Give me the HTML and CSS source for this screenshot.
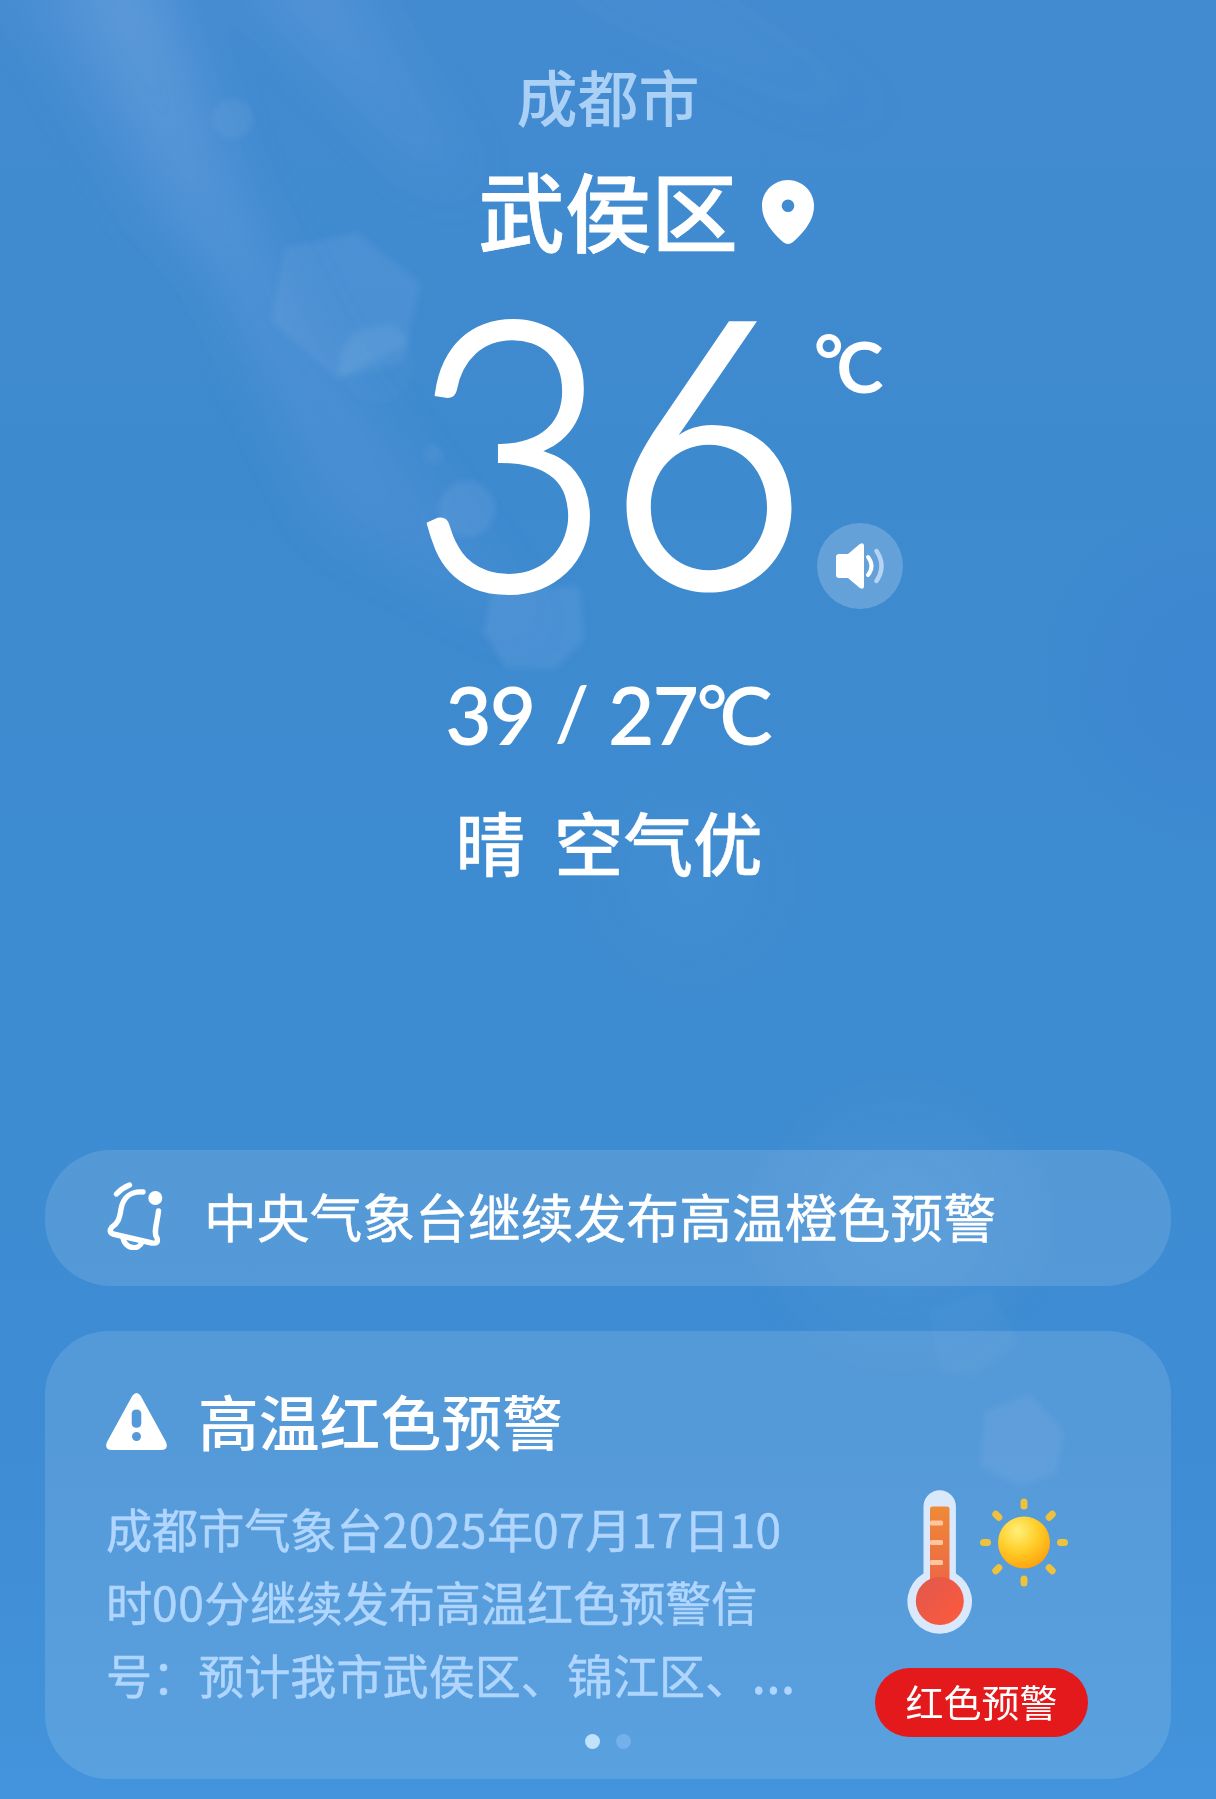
FILE: index.html
```html
<!DOCTYPE html>
<html lang="zh-CN">
<head>
<meta charset="utf-8">
<title>武侯区天气</title>
<link rel="stylesheet" href="styles.css">
</head>
<body>
<main class="screen">
  <svg class="sky" viewBox="0 0 1216 1799" aria-hidden="true">
    <defs>
      <filter id="soft" x="-50%" y="-50%" width="200%" height="200%"><feGaussianBlur stdDeviation="28"/></filter>
      <filter id="edge" x="-20%" y="-20%" width="140%" height="140%"><feGaussianBlur stdDeviation="3"/></filter>
      <radialGradient id="glow"><stop offset="0" stop-color="#fff" stop-opacity=".06"/><stop offset="1" stop-color="#fff" stop-opacity="0"/></radialGradient>
      <radialGradient id="deep"><stop offset="0" stop-color="#3a6fd6" stop-opacity=".2"/><stop offset="1" stop-color="#3a6fd6" stop-opacity="0"/></radialGradient>
      <linearGradient id="ray" x1="100" y1="0" x2="420" y2="560" gradientUnits="userSpaceOnUse"><stop offset="0" stop-color="#d5dcff" stop-opacity=".19"/><stop offset=".35" stop-color="#cfdcff" stop-opacity=".12"/><stop offset="1" stop-color="#b8baff" stop-opacity=".08"/></linearGradient>
    </defs>
    <g filter="url(#soft)" fill="url(#ray)">
      <path d="M70-40 L150-40 L235 180 L310 330 L540 640 L330 520 L190 230Z"/>
      <path d="M0-40 L60-40 L230 240 L160 240Z" opacity=".4"/>
      <path d="M230-40 L330-40 L480 190 L420 170Z" opacity=".7"/>
      <path d="M520-40 L650-40 L900 120 L800 100Z" opacity=".3"/>
    </g>
    <circle cx="1216" cy="680" r="180" fill="url(#deep)"/>
    <g fill="#cfdcff" filter="url(#edge)">
      <circle cx="233" cy="119" r="20" fill-opacity=".07"/>
      <path d="M285 248 L357 232 L421 283 L407 344 L337 379 L271 321Z" fill-opacity=".08"/>
      <path d="M337 379 L341 348 L355 330 L394 322 L409 339 L403 362Z" fill-opacity=".07"/>
      <circle cx="378" cy="366" r="37" fill-opacity=".03"/>
      <circle cx="433" cy="454" r="10" fill-opacity=".06"/>
      <circle cx="467" cy="509" r="28" fill-opacity=".09"/>
      <path d="M492 590 L580 586 L584 640 L556 668 L506 668 L484 632Z" fill-opacity=".09"/>
      <path d="M985 1412 L1030 1394 L1064 1432 L1056 1474 L1020 1486 L980 1466Z" fill-opacity=".08"/>
      <path d="M930 1310 L990 1290 L1020 1345 L975 1378 L940 1370Z" fill-opacity=".03"/>
    </g>
    <circle cx="900" cy="1220" r="170" fill="url(#glow)"/>
    <circle cx="690" cy="880" r="160" fill="url(#glow)" opacity=".5"/>
  </svg>

  <header class="now">
    <p class="city">成都市</p>
    <div class="triple district">
      <h1 class="district-name">武侯区</h1>
      <svg class="pin" viewBox="0 0 52 64" aria-hidden="true"><path fill="#fff" fill-rule="evenodd" d="M26 0C11.600 0 0 11.600 0 26c0 15 11 27 21 36q5 4 10 0c10-9 21-21 21-36C52 11.600 40.400 0 26 0zm0 19.500a6.300 6.300 0 1 1 0 12.600a6.300 6.300 0 0 1 0-12.600z"/></svg>
    </div>
    <div class="triple current">
      <div class="temp"><span class="tens">3</span><span class="ones">6</span></div>
      <div class="side">
        <span class="unit"><i>°</i>C</span>
        <button class="speak" aria-label="播报">
          <svg viewBox="0 0 48 46" aria-hidden="true">
            <path fill="#fff" d="M3 11h9L23.500 1.200Q28-1.500 28 3v40q0 4.500-4.500 1.800L12 35H3q-3 0-3-3V14q0-3 3-3z"/>
            <path d="M32 14q7 9 0 18" fill="none" stroke="#fff" stroke-width="4" stroke-linecap="round"/>
            <path d="M40.500 8q10 15 0 30" fill="none" stroke="#b5d3f5" stroke-width="4.500" stroke-linecap="round"/>
          </svg>
        </button>
      </div>
    </div>
    <p class="range"><span>39</span><span class="slash">/</span><span>27</span><span class="deg"><i>°</i>C</span></p>
    <p class="sky-state"><span>晴</span><span>空气优</span></p>
  </header>

  <section class="notice">
    <svg class="bell" viewBox="0 0 56 68" fill="none" stroke="#fff" stroke-width="5.400" stroke-linecap="round" stroke-linejoin="round" aria-hidden="true">
      <path d="M36 10C23 9 16 16 14 27C12.500 38 10 42 5 45Q1 50 6 52L45 61Q52 62 50 56C46 51 50 42 51.500 29"/>
      <path d="M16 56C18 67 32 69 35 60"/>
      <path d="M9.500 12Q15 6 22.500 3"/>
      <circle cx="48.300" cy="16" r="7" fill="#fff" stroke="none"/>
    </svg>
    <p class="notice-text">中央气象台继续发布高温橙色预警</p>
  </section>

  <section class="alert">
    <div class="alert-head">
      <svg class="warn" viewBox="0 0 61 57" aria-hidden="true"><path fill="#fff" fill-rule="evenodd" d="M26.500 2.500Q30.500-2.500 34.500 2.500L60 49Q63 57 55 57H6Q-2 57 1 49zM30.500 16.500q-4.800 0-4.800 4.500v9q0 4.800 4.800 4.800t4.800-4.800v-9q0-4.500-4.800-4.500zM30.500 39a4.500 4.500 0 1 0 0 9a4.500 4.500 0 0 0 0-9z"/></svg>
      <h2 class="alert-title">高温红色预警</h2>
    </div>
    <div class="alert-body">
      <p class="alert-text">成都市气象台<b>2025</b>年<b>07</b>月<b>17</b>日<b>10</b><br>时<b>00</b>分继续发布高温红色预警信<br>号：预计我市武侯区、锦江区、<span class="more">…</span></p>
      <div class="level">
        <svg class="heat" viewBox="0 0 164 146" aria-hidden="true">
          <defs>
            <linearGradient id="tube" x1="0" y1="0" x2="0" y2="1"><stop offset="0" stop-color="#ee8a38"/><stop offset="1" stop-color="#ee6545"/></linearGradient>
            <linearGradient id="bulb" x1="0" y1="0" x2="1" y2="1"><stop offset="0" stop-color="#e0584d"/><stop offset="1" stop-color="#ff5a3c"/></linearGradient>
            <radialGradient id="sun" cx=".38" cy=".28" r=".8"><stop offset="0" stop-color="#fff07a"/><stop offset=".5" stop-color="#ffcd28"/><stop offset="1" stop-color="#ff9c0a"/></radialGradient>
          </defs>
          <path fill="#d9e9fb" d="M16.500 16.500a16.200 16.200 0 0 1 32.400 0V83.500a32.300 32.300 0 1 1-32.400 0z"/>
          <path fill="url(#tube)" d="M23 19q0-2.500 2.500-2.500H40q2.500 0 2.500 2.500v77H23z"/>
          <circle cx="32.800" cy="111" r="24" fill="url(#bulb)"/>
          <g fill="#ffc69d"><rect x="23" y="30.500" width="13" height="5" rx="1.500"/><rect x="23" y="50" width="13" height="5" rx="1.500"/><rect x="23" y="70" width="13" height="5" rx="1.500"/></g>
          <circle cx="117" cy="52.500" r="26" fill="url(#sun)"/>
          <g stroke="#eec23c" stroke-width="7" stroke-linecap="round">
            <path d="M117 12v4M117 89v4M76.500 52.500h4M153.500 52.500h4M88.800 24.300l3 3M142.200 77.700l3 3M88.800 80.700l3-3M142.200 27.300l3-3"/>
          </g>
        </svg>
        <span class="badge">红色预警</span>
      </div>
    </div>
    <div class="dots"><span class="dot on"></span><span class="dot"></span></div>
  </section>
</main>
</body>
</html>
```

FILE: styles.css
```css
* { box-sizing: border-box; }
body { margin: 0; }
p, h1, h2 { margin: 0; font-weight: 400; }
i { font-style: normal; }

.screen {
  position: relative;
  isolation: isolate;
  width: 1216px;
  height: 1799px;
  overflow: hidden;
  padding: 0 45px;
  color: #fff;
  font-family: "Noto Sans CJK SC", sans-serif;
  background: linear-gradient(180deg, #438bd1 0, #3e8acf 25%, #3d8bd1 55%, #3e8cd3 80%, #4394dc 100%);
}
.sky {
  position: absolute;
  inset: 0;
  z-index: -1;
  width: 1216px;
  height: 1799px;
}

.now {
  display: flex;
  flex-direction: column;
  height: 1150px;
  padding-top: 59px;
}
.city {
  height: 74px;
  line-height: 74px;
  font-size: 61px;
  font-weight: 500;
  text-align: center;
  color: #abd0f5;
}
.triple {
  display: grid;
  grid-template-columns: 1fr auto 1fr;
}
.district {
  height: 110px;
  margin-top: 21px;
}
.district-name {
  grid-column: 2;
  font-size: 86.500px;
  line-height: 110px;
  font-weight: 500;
  -webkit-text-stroke: .8px #fff;
}
.pin {
  width: 52px;
  height: 64px;
  margin: 26px 0 0 24px;
}

.current {
  height: 330px;
  margin-top: 26px;
}
.temp {
  grid-column: 2;
  display: flex;
  width: 382px;
  line-height: 330px;
  font-weight: 300;
}
.tens {
  width: 192px;
  margin: -10px 0 0 -6px;
  font-family: Lato, sans-serif;
  font-size: 373px;
  -webkit-text-stroke: 6px #fff;
  stroke-linejoin: round;
  transform: scaleX(.92);
  transform-origin: left;
}
.ones {
  width: 196px;
  font-family: Inter, sans-serif;
  font-size: 368px;
  font-feature-settings: "cv03";
}
.side {
  display: flex;
  flex-direction: column;
  justify-content: space-between;
  padding: 41px 0 11px 18px;
}
.unit {
  font-family: Lato, sans-serif;
  font-size: 71px;
  line-height: 70px;
  font-weight: 700;
}
.unit i { margin-left: -3px; letter-spacing: -7px; }
.unit i, .deg i {
  position: relative;
  top: -7px;
}
.deg i { letter-spacing: -8px; font-size: 74px; }
.speak {
  display: grid;
  place-items: center;
  width: 86px;
  height: 86px;
  padding: 0;
  border: 0;
  border-radius: 50%;
  background: rgba(255, 255, 255, .2);
}
.speak svg { width: 48px; height: 46px; }

.range {
  display: flex;
  justify-content: center;
  height: 90px;
  margin-top: 49px;
  font-family: Lato, sans-serif;
  font-size: 80px;
  line-height: 90px;
  font-weight: 600;
  letter-spacing: -2px;
}
.slash {
  width: 74px;
  text-align: center;
  font-size: 75px;
  line-height: 86px;
}
.sky-state {
  display: flex;
  justify-content: center;
  gap: 29px;
  height: 90px;
  margin-top: 37px;
  padding-left: 2px;
  font-size: 69.500px;
  line-height: 90px;
  font-weight: 500;
  -webkit-text-stroke: .4px #fff;
}

.notice {
  display: flex;
  align-items: flex-start;
  gap: 41px;
  height: 136px;
  padding: 30px 0 0 62px;
  border-radius: 66px;
  background: rgba(255, 255, 255, .12);
}
.bell { width: 56px; height: 68px; margin-top: 2px; }
.notice-text {
  font-size: 52.800px;
  line-height: 70px;
  -webkit-text-stroke: .5px #fff;
}

.alert {
  display: flex;
  flex-direction: column;
  height: 448px;
  margin-top: 45px;
  padding: 48px 83px 0 61px;
  border-radius: 64px;
  background: rgba(255, 255, 255, .12);
}
.alert-head {
  display: flex;
  align-items: center;
  gap: 31px;
  height: 82px;
}
.warn { width: 61px; height: 57px; margin-top: 2px; }
.alert-title {
  font-size: 60.800px;
  line-height: 82px;
  font-weight: 500;
}
.alert-body {
  display: flex;
  justify-content: space-between;
  height: 262px;
}
.alert-text {
  padding-top: 31px;
  font-size: 46.100px;
  line-height: 73px;
  color: #b0d6ff;
  white-space: nowrap;
  -webkit-text-stroke: .5px #b0d6ff;
}
.alert-text b {
  font-weight: 400;
  letter-spacing: .5px;
}
.more {
  font-family: "Noto Sans", sans-serif;
  font-size: 56px;
  line-height: 40px;
}
.level {
  display: flex;
  flex-direction: column;
  align-items: center;
  justify-content: space-between;
  width: 213px;
  padding: 29px 0 0;
  height: 276px;
}
.heat { flex: none; width: 164px; height: 146px; margin-left: 14px; }
.badge {
  width: 213px;
  height: 69px;
  border-radius: 35px;
  background: #e3191b;
  font-size: 38px;
  line-height: 66px;
  text-align: center;
}
.dots {
  display: flex;
  gap: 16px;
  width: 46px;
  margin: 11px 0 0 479px;
}
.dot {
  width: 15px;
  height: 15px;
  border-radius: 50%;
  background: #73b0ec;
}
.dot.on { background: #c2e1fb; }
```
